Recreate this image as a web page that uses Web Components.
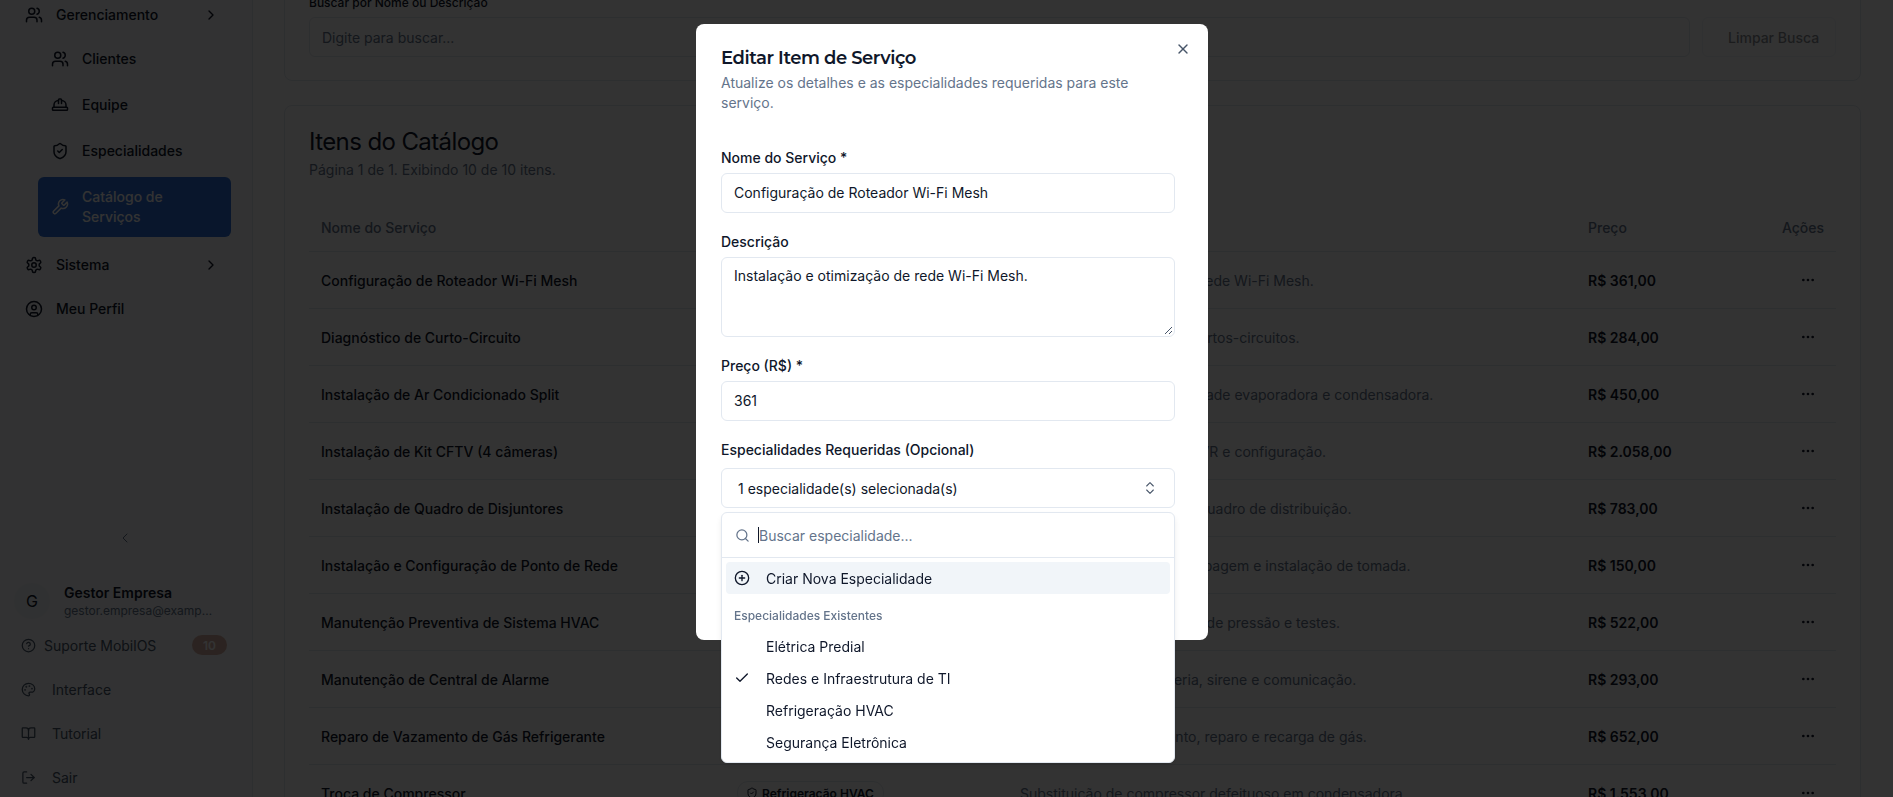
<!DOCTYPE html>
<html lang="pt-BR">
<head>
<meta charset="utf-8">
<title>Catálogo de Serviços</title>
<style>
  html, body { margin: 0; height: 797px; overflow: hidden; background: #fff; }
  body { font-family: Inter, "Liberation Sans", sans-serif; color: #0f172a; }
</style>
</head>
<body>
<app-shell></app-shell>
<edit-modal></edit-modal>

<script>
const ICONS = {
  users: '<path d="M16 21v-2a4 4 0 0 0-4-4H6a4 4 0 0 0-4 4v2"/><circle cx="9" cy="7" r="4"/><path d="M22 21v-2a4 4 0 0 0-3-3.87"/><path d="M16 3.13a4 4 0 0 1 0 7.75"/>',
  hat: '<path d="M2 18a1 1 0 0 0 1 1h18a1 1 0 0 0 1-1v-2a1 1 0 0 0-1-1H3a1 1 0 0 0-1 1v2z"/><path d="M10 10V5a1 1 0 0 1 1-1h2a1 1 0 0 1 1 1v5"/><path d="M4 15v-3a6 6 0 0 1 6-6"/><path d="M14 6a6 6 0 0 1 6 6v3"/>',
  shield: '<path d="M20 13c0 5-3.5 7.5-7.66 8.95a1 1 0 0 1-.67-.01C7.5 20.5 4 18 4 13V6a1 1 0 0 1 1-1c2 0 4.5-1.2 6.24-2.72a1.17 1.17 0 0 1 1.52 0C14.51 3.81 17 5 19 5a1 1 0 0 1 1 1z"/><path d="m9 12 2 2 4-4"/>',
  wrench: '<path d="M14.7 6.3a1 1 0 0 0 0 1.4l1.6 1.6a1 1 0 0 0 1.4 0l3.77-3.77a6 6 0 0 1-7.94 7.94l-6.91 6.91a2.12 2.12 0 0 1-3-3l6.91-6.91a6 6 0 0 1 7.94-7.94l-3.76 3.76z"/>',
  settings: '<path d="M12.22 2h-.44a2 2 0 0 0-2 2v.18a2 2 0 0 1-1 1.73l-.43.25a2 2 0 0 1-2 0l-.15-.08a2 2 0 0 0-2.73.73l-.22.38a2 2 0 0 0 .73 2.73l.15.1a2 2 0 0 1 1 1.72v.51a2 2 0 0 1-1 1.74l-.15.09a2 2 0 0 0-.73 2.73l.22.38a2 2 0 0 0 2.73.73l.15-.08a2 2 0 0 1 2 0l.43.25a2 2 0 0 1 1 1.73V20a2 2 0 0 0 2 2h.44a2 2 0 0 0 2-2v-.18a2 2 0 0 1 1-1.73l.43-.25a2 2 0 0 1 2 0l.15.08a2 2 0 0 0 2.73-.73l.22-.39a2 2 0 0 0-.73-2.73l-.15-.08a2 2 0 0 1-1-1.74v-.5a2 2 0 0 1 1-1.74l.15-.09a2 2 0 0 0 .73-2.73l-.22-.38a2 2 0 0 0-2.73-.73l-.15.08a2 2 0 0 1-2 0l-.43-.25a2 2 0 0 1-1-1.73V4a2 2 0 0 0-2-2z"/><circle cx="12" cy="12" r="3"/>',
  user: '<circle cx="12" cy="12" r="10"/><circle cx="12" cy="10" r="3"/><path d="M7 20.662V19a2 2 0 0 1 2-2h6a2 2 0 0 1 2 2v1.662"/>',
  right: '<path d="m9 18 6-6-6-6"/>',
  left: '<path d="m15 18-6-6 6-6"/>',
  help: '<circle cx="12" cy="12" r="10"/><path d="M9.09 9a3 3 0 0 1 5.83 1c0 2-3 3-3 3"/><path d="M12 17h.01"/>',
  palette: '<circle cx="13.5" cy="6.5" r=".5" fill="currentColor"/><circle cx="17.5" cy="10.5" r=".5" fill="currentColor"/><circle cx="8.5" cy="7.5" r=".5" fill="currentColor"/><circle cx="6.5" cy="12.5" r=".5" fill="currentColor"/><path d="M12 2C6.5 2 2 6.5 2 12s4.5 10 10 10c.926 0 1.648-.746 1.648-1.688 0-.437-.18-.835-.437-1.125-.29-.289-.438-.652-.438-1.125a1.64 1.64 0 0 1 1.668-1.668h1.996c3.051 0 5.555-2.503 5.555-5.554C21.965 6.012 17.461 2 12 2z"/>',
  book: '<path d="M12 7v14"/><path d="M3 18a1 1 0 0 1-1-1V4a1 1 0 0 1 1-1h5a4 4 0 0 1 4 4 4 4 0 0 1 4-4h5a1 1 0 0 1 1 1v13a1 1 0 0 1-1 1h-6a3 3 0 0 0-3 3 3 3 0 0 0-3-3z"/>',
  logout: '<path d="M9 21H5a2 2 0 0 1-2-2V5a2 2 0 0 1 2-2h4"/><polyline points="16 17 21 12 16 7"/><line x1="21" y1="12" x2="9" y2="12"/>',
  x: '<path d="M18 6 6 18"/><path d="m6 6 12 12"/>',
  updown: '<path d="m7 15 5 5 5-5"/><path d="m7 9 5-5 5 5"/>',
  search: '<circle cx="11" cy="11" r="8"/><path d="m21 21-4.3-4.3"/>',
  plus: '<circle cx="12" cy="12" r="10"/><path d="M8 12h8"/><path d="M12 8v8"/>',
  check: '<path d="M20 6 9 17l-5-5"/>',
  dots: '<circle cx="12" cy="12" r="1"/><circle cx="19" cy="12" r="1"/><circle cx="5" cy="12" r="1"/>'
};

class UiIcon extends HTMLElement {
  connectedCallback() {
    const size = this.getAttribute('size') || 18;
    const stroke = this.getAttribute('stroke') || 2;
    this.attachShadow({ mode: 'open' }).innerHTML = `
      <style>
        :host { display: inline-flex; flex: none; width: ${size}px; height: ${size}px; }
        svg { display: block; }
      </style>
      <svg width="${size}" height="${size}" viewBox="0 0 24 24" fill="none" stroke="currentColor"
        stroke-width="${stroke}" stroke-linecap="round" stroke-linejoin="round">${ICONS[this.getAttribute('name')]}</svg>`;
  }
}

class NavItem extends HTMLElement {
  connectedCallback() {
    const arrow = this.hasAttribute('arrow') ? '<ui-icon class="arrow" name="right" size="16"></ui-icon>' : '';
    this.attachShadow({ mode: 'open' }).innerHTML = `
      <style>
        :host { display: flex; align-items: center; gap: 13px; min-height: 40px; padding: 0 13px 0 12px;
          box-sizing: border-box; border-radius: 6px; font-size: 14px; line-height: 20px; font-weight: 500; color: #0f172a; }
        :host([sub]) { padding-left: 13px; }
        :host([active]) { background: #2f6fd9; color: #fff; padding-top: 10px; padding-bottom: 10px; }
        .label { flex: 1; }
        .arrow { margin-right: -1px; }
      </style>
      <ui-icon name="${this.getAttribute('icon')}" size="18"></ui-icon>
      <span class="label"><slot></slot></span>${arrow}`;
  }
}

class UserCard extends HTMLElement {
  connectedCallback() {
    this.attachShadow({ mode: 'open' }).innerHTML = `
      <style>
        :host { display: flex; align-items: center; gap: 14px; padding: 0 0 0 1px; height: 40px; }
        .avatar { width: 36px; height: 36px; border-radius: 50%; background: #f1f5f9; display: flex;
          align-items: center; justify-content: center; font-size: 16px; color: #0f172a; flex: none; }
        .info { min-width: 0; width: 150px; }
        .name { font-size: 14px; line-height: 20px; font-weight: 600; color: #0f172a; }
        .mail { font-size: 12px; line-height: 16px; color: #64748b; white-space: nowrap; overflow: hidden; text-overflow: ellipsis; }
      </style>
      <div class="avatar">G</div>
      <div class="info">
        <div class="name">Gestor Empresa</div>
        <div class="mail">gestor.empresa@example.com</div>
      </div>`;
  }
}

class FootLink extends HTMLElement {
  connectedCallback() {
    const gap = this.getAttribute('gap') || 16;
    this.attachShadow({ mode: 'open' }).innerHTML = `
      <style>
        :host { display: flex; align-items: center; gap: ${gap}px; height: 40px; padding: 0 4px 0 8px;
          font-size: 14px; color: #475569; }
        .label { flex: 1; }
      </style>
      <ui-icon name="${this.getAttribute('icon')}" size="15"></ui-icon>
      <span class="label"><slot></slot></span>
      <slot name="end"></slot>`;
  }
}

class CountBadge extends HTMLElement {
  connectedCallback() {
    this.attachShadow({ mode: 'open' }).innerHTML = `
      <style>
        :host { display: inline-flex; align-items: center; justify-content: center; width: 35px; height: 20px;
          border-radius: 10px; background: #d8b0a4; color: #fff; font-size: 12px; font-weight: 600; }
      </style>
      <slot></slot>`;
  }
}

class SideBar extends HTMLElement {
  connectedCallback() {
    this.attachShadow({ mode: 'open' }).innerHTML = `
      <style>
        :host { display: flex; flex-direction: column; flex: none; width: 253px; height: 797px; box-sizing: border-box;
          padding: 0 21px 0 13px; border-right: 1px solid #e2e8f0; background: #f8fafc; }
        nav { display: flex; flex-direction: column; gap: 4px; margin-top: -5px; }
        .subs { display: flex; flex-direction: column; gap: 6px; margin: 0 0 4px 25px; }
        .collapse { display: flex; justify-content: center; margin-top: auto; color: #64748b; padding-left: 5px; }
        user-card { margin-top: 35px; }
        .links { display: flex; flex-direction: column; gap: 4px; margin-top: 4px; }
      </style>
      <nav>
        <nav-item icon="users" arrow>Gerenciamento</nav-item>
        <div class="subs">
          <nav-item sub icon="users">Clientes</nav-item>
          <nav-item sub icon="hat">Equipe</nav-item>
          <nav-item sub icon="shield">Especialidades</nav-item>
          <nav-item sub active icon="wrench">Catálogo de Serviços</nav-item>
        </div>
        <nav-item icon="settings" arrow>Sistema</nav-item>
        <nav-item icon="user">Meu Perfil</nav-item>
      </nav>
      <div class="collapse"><ui-icon name="left" size="16" stroke="1.5"></ui-icon></div>
      <user-card></user-card>
      <div class="links">
        <foot-link icon="help" gap="8">Suporte MobilOS<count-badge slot="end">10</count-badge></foot-link>
        <foot-link icon="palette">Interface</foot-link>
        <foot-link icon="book">Tutorial</foot-link>
        <foot-link icon="logout">Sair</foot-link>
      </div>`;
  }
}

class SearchCard extends HTMLElement {
  connectedCallback() {
    this.attachShadow({ mode: 'open' }).innerHTML = `
      <style>
        :host { display: block; border: 1px solid #e2e8f0; border-radius: 8px; padding: 24px 24px 23px; background: #fff; }
        label { display: block; font-size: 12px; line-height: 16px; font-weight: 500; color: #0f172a; margin: 3px 0 6px; }
        .row { display: flex; gap: 12px; }
        .field { flex: 1; height: 40px; box-sizing: border-box; border: 1px solid #e2e8f0; border-radius: 6px;
          padding: 0 12px; display: flex; align-items: center; font-size: 14px; color: #64748b; }
        .clear { width: 134px; height: 40px; box-sizing: border-box; border: 1px solid #e2e8f0; border-radius: 6px;
          display: flex; align-items: center; padding-left: 25px; font-size: 14px; font-weight: 500; color: #0f172a; opacity: .5; }
      </style>
      <label>Buscar por Nome ou Descrição</label>
      <div class="row">
        <div class="field">Digite para buscar...</div>
        <div class="clear">Limpar Busca</div>
      </div>`;
  }
}

class CatalogRow extends HTMLElement {
  connectedCallback() {
    const a = n => this.getAttribute(n);
    const badge = a('spec') ? `<span class="badge"><ui-icon name="shield" size="12"></ui-icon>${a('spec')}</span>` : '';
    this.attachShadow({ mode: 'open' }).innerHTML = `
      <style>
        :host { display: grid; grid-template-columns: 415px 284px 568px 1fr 42px; align-items: center; height: 57px; box-sizing: border-box;
          padding: 0 7px 0 12px; border-bottom: 1px solid #e2e8f0; font-size: 14px; color: #0f172a; white-space: nowrap; }
        .name { font-weight: 500; }
        .desc { color: #64748b; }
        .price { font-weight: 600; }
        .badge { display: inline-flex; align-items: center; gap: 4px; height: 22px; padding: 0 9px 0 8px; margin-left: 1px;
          border: 1px solid #e2e8f0; border-radius: 11px; font-size: 12px; font-weight: 600; }
        .act { display: flex; justify-content: center; }
      </style>
      <div class="name">${a('name')}</div>
      <div>${badge}</div>
      <div class="desc">${a('desc')}</div>
      <div class="price">${a('price')}</div>
      <div class="act"><ui-icon name="dots" size="16"></ui-icon></div>`;
  }
}

class CatalogCard extends HTMLElement {
  connectedCallback() {
    this.attachShadow({ mode: 'open' }).innerHTML = `
      <style>
        :host { display: block; border: 1px solid #e2e8f0; border-radius: 8px; padding: 24px; background: #fff; margin-top: 24px; }
        h2 { margin: 0; font-size: 24px; line-height: 24px; font-weight: 400; letter-spacing: -.6px; color: #0f172a; }
        p { margin: 6px 0 0; font-size: 14px; line-height: 20px; color: #64748b; }
        .head { display: grid; grid-template-columns: 415px 284px 568px 1fr auto; align-items: center; height: 48px; box-sizing: border-box;
          margin-top: 24px; padding: 0 12px; border-bottom: 1px solid #e2e8f0; font-size: 14px; font-weight: 500; color: #64748b; }
      </style>
      <h2>Itens do Catálogo</h2>
      <p>Página 1 de 1. Exibindo 10 de 10 itens.</p>
      <div class="head"><div>Nome do Serviço</div><div></div><div></div><div>Preço</div><div>Ações</div></div>
      <catalog-row name="Configuração de Roteador Wi-Fi Mesh" desc="Instalação e otimização de rede Wi-Fi Mesh." price="R$ 361,00"></catalog-row>
      <catalog-row name="Diagnóstico de Curto-Circuito" desc="Diagnóstico e solução de curtos-circuitos." price="R$ 284,00"></catalog-row>
      <catalog-row name="Instalação de Ar Condicionado Split" desc="Instalação completa de unidade evaporadora e condensadora." price="R$ 450,00"></catalog-row>
      <catalog-row name="Instalação de Kit CFTV (4 câmeras)" desc="Instalação de 4 câmeras, DVR e configuração." price="R$ 2.058,00"></catalog-row>
      <catalog-row name="Instalação de Quadro de Disjuntores" desc="Instalação e montagem de quadro de distribuição." price="R$ 783,00"></catalog-row>
      <catalog-row name="Instalação e Configuração de Ponto de Rede" desc="Lançamento de cabos, crimpagem e instalação de tomada." price="R$ 150,00"></catalog-row>
      <catalog-row name="Manutenção Preventiva de Sistema HVAC" desc="Limpeza de filtros, medição de pressão e testes." price="R$ 522,00"></catalog-row>
      <catalog-row name="Manutenção de Central de Alarme" desc="Inspeção de painel, bateria, sirene e comunicação." price="R$ 293,00"></catalog-row>
      <catalog-row name="Reparo de Vazamento de Gás Refrigerante" desc="Localização de vazamento, reparo e recarga de gás." price="R$ 652,00"></catalog-row>
      <catalog-row name="Troca de Compressor" spec="Refrigeração HVAC" desc="Substituição de compressor defeituoso em condensadora." price="R$ 1.553,00"></catalog-row>`;
  }
}

class AppShell extends HTMLElement {
  connectedCallback() {
    this.attachShadow({ mode: 'open' }).innerHTML = `
      <style>
        :host { display: flex; height: 797px; overflow: hidden; }
        main { flex: 1; min-width: 0; padding: 0 32px 0 31px; margin-top: -33px; }
      </style>
      <side-bar></side-bar>
      <main>
        <search-card></search-card>
        <catalog-card></catalog-card>
      </main>`;
  }
}

class FormField extends HTMLElement {
  connectedCallback() {
    this.attachShadow({ mode: 'open' }).innerHTML = `
      <style>
        :host { display: block; margin-top: 19px; position: relative; }
        label { display: block; font-size: 14px; line-height: 20px; font-weight: 500; color: #0f172a; margin-bottom: 5px; }
        :host([loose]) label { margin-bottom: 8px; }
      </style>
      <label>${this.getAttribute('label')}</label>
      <slot></slot>`;
  }
}

class TextBox extends HTMLElement {
  connectedCallback() {
    this.attachShadow({ mode: 'open' }).innerHTML = `
      <style>
        :host { display: flex; align-items: center; height: 40px; box-sizing: border-box; padding: 0 12px;
          border: 1px solid #e2e8f0; border-radius: 6px; background: #fff; font-size: 14px; line-height: 20px; color: #0f172a; position: relative; }
        :host([area]) { height: 80px; align-items: flex-start; padding-top: 8px; }
        svg { position: absolute; right: 1px; bottom: 1px; }
      </style>
      <slot></slot>
      ${this.hasAttribute('area') ? '<svg width="9" height="9" viewBox="0 0 9 9" stroke="#475569" stroke-width="1"><path d="M1 8 8 1M5 8l3-3"/></svg>' : ''}`;
  }
}

class ComboOption extends HTMLElement {
  connectedCallback() {
    const icon = this.getAttribute('icon');
    this.attachShadow({ mode: 'open' }).innerHTML = `
      <style>
        :host { display: flex; align-items: center; height: 32px; margin: 0 4px; padding-left: 8px; border-radius: 4px;
          font-size: 14px; color: #0f172a; }
        :host([hot]) { background: #f1f5f9; }
        .slot { width: 16px; margin-right: 16px; display: flex; }
      </style>
      <span class="slot">${icon ? `<ui-icon name="${icon}" size="16"></ui-icon>` : ''}</span>
      <span><slot></slot></span>`;
  }
}

class SpecialtyCombo extends HTMLElement {
  connectedCallback() {
    this.attachShadow({ mode: 'open' }).innerHTML = `
      <style>
        :host { display: block; position: relative; }
        .trigger { display: flex; align-items: center; justify-content: space-between; height: 40px; box-sizing: border-box;
          padding: 0 16px 0 16px; border: 1px solid #e2e8f0; border-radius: 6px; font-size: 14px; color: #0f172a; }
        .trigger ui-icon { color: #475569; }
        .pop { position: absolute; left: 0; right: 0; top: 44px; height: 251px; box-sizing: border-box; background: #fff;
          border: 1px solid #e2e8f0; border-radius: 6px; box-shadow: 0 4px 6px -1px rgba(0,0,0,.1); overflow: hidden; }
        .find { display: flex; align-items: center; gap: 8px; height: 44px; padding-left: 13px; border-bottom: 1px solid #e2e8f0;
          font-size: 14px; color: #64748b; }
        .find ui-icon { color: #64748b; }
        .caret { width: 1px; height: 16px; background: #0f172a; margin-right: -8px; flex: none; }
        .list { padding-top: 4px; }
        h4 { margin: 4px 0 0; padding: 12px 12px 0; height: 32px; line-height: 12px; box-sizing: border-box;
          font-size: 12px; font-weight: 500; color: #64748b; }
      </style>
      <div class="trigger">
        <span>1 especialidade(s) selecionada(s)</span>
        <ui-icon name="updown" size="16" stroke="1.6"></ui-icon>
      </div>
      <div class="pop">
        <div class="find">
          <ui-icon name="search" size="15"></ui-icon>
          <span class="caret"></span>
          <span>Buscar especialidade...</span>
        </div>
        <div class="list">
          <combo-option hot icon="plus">Criar Nova Especialidade</combo-option>
          <h4>Especialidades Existentes</h4>
          <combo-option>Elétrica Predial</combo-option>
          <combo-option icon="check">Redes e Infraestrutura de TI</combo-option>
          <combo-option>Refrigeração HVAC</combo-option>
          <combo-option>Segurança Eletrônica</combo-option>
        </div>
      </div>`;
  }
}

class EditModal extends HTMLElement {
  connectedCallback() {
    this.attachShadow({ mode: 'open' }).innerHTML = `
      <style>
        :host { position: fixed; inset: 0; background: rgba(0,0,0,.8); }
        .dialog { position: absolute; left: 696px; top: 24px; width: 512px; height: 616px; box-sizing: border-box;
          padding: 25px 33px 24px 25px; background: #fff; border-radius: 8px; }
        h2 { margin: 0; font-family: Montserrat, Inter, "Liberation Sans", sans-serif; font-size: 18px; line-height: 18px;
          font-weight: 600; letter-spacing: -.45px; color: #0f172a; }
        p { margin: 6px 0 35px; font-size: 14px; line-height: 20px; color: #64748b; }
        .close { position: absolute; top: 17px; right: 17px; color: #475569; }
        form-field:first-of-type { margin-top: 0; }
      </style>
      <div class="dialog">
        <ui-icon class="close" name="x" size="16"></ui-icon>
        <h2>Editar Item de Serviço</h2>
        <p>Atualize os detalhes e as especialidades requeridas para este serviço.</p>
        <form-field label="Nome do Serviço *"><text-box>Configuração de Roteador Wi-Fi Mesh</text-box></form-field>
        <form-field label="Descrição"><text-box area>Instalação e otimização de rede Wi-Fi Mesh.</text-box></form-field>
        <form-field label="Preço (R$) *"><text-box>361</text-box></form-field>
        <form-field loose label="Especialidades Requeridas (Opcional)"><specialty-combo></specialty-combo></form-field>
      </div>`;
  }
}

customElements.define('ui-icon', UiIcon);
customElements.define('nav-item', NavItem);
customElements.define('user-card', UserCard);
customElements.define('foot-link', FootLink);
customElements.define('count-badge', CountBadge);
customElements.define('side-bar', SideBar);
customElements.define('search-card', SearchCard);
customElements.define('catalog-row', CatalogRow);
customElements.define('catalog-card', CatalogCard);
customElements.define('app-shell', AppShell);
customElements.define('form-field', FormField);
customElements.define('text-box', TextBox);
customElements.define('combo-option', ComboOption);
customElements.define('specialty-combo', SpecialtyCombo);
customElements.define('edit-modal', EditModal);
</script>
</body>
</html>
